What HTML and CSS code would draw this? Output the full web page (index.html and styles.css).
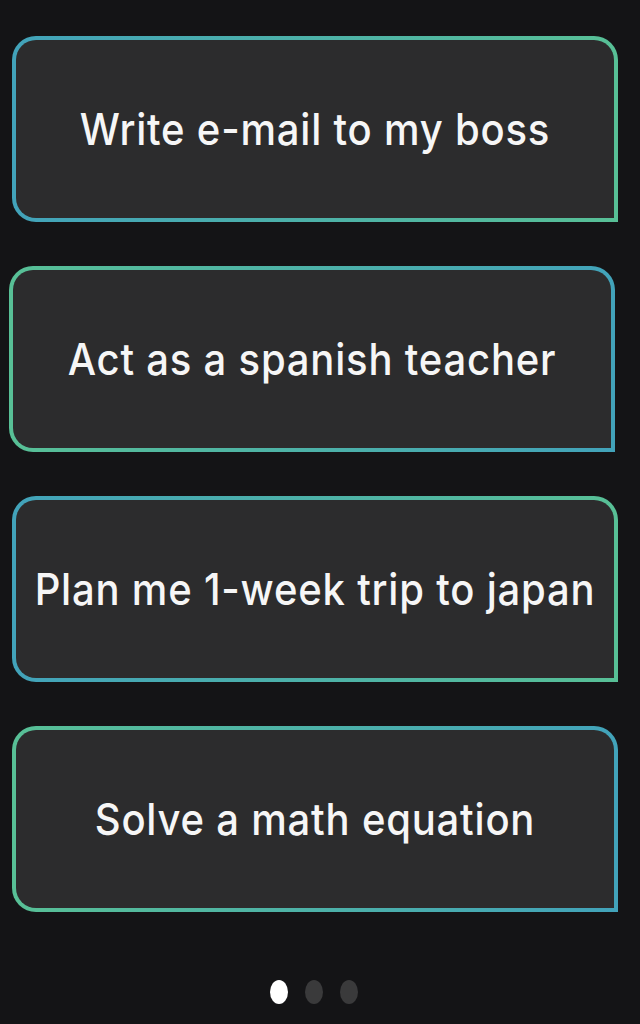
FILE: index.html
```html
<!DOCTYPE html>
<html>
<head>
<meta charset="utf-8">
<link rel="stylesheet" href="styles.css">
</head>
<body>
<main class="screen">
  <div class="cards">
    <div class="card card-bg"><span class="label">Write e-mail to my boss</span></div>
    <div class="card card-gb shift-left"><span class="label">Act as a spanish teacher</span></div>
    <div class="card card-bg"><span class="label">Plan me 1-week trip to japan</span></div>
    <div class="card card-gb"><span class="label">Solve a math equation</span></div>
  </div>
  <div class="dots">
    <span class="dot active"></span>
    <span class="dot"></span>
    <span class="dot"></span>
  </div>
</main>
</body>
</html>
```
FILE: styles.css
```css
html, body {
  margin: 0;
  padding: 0;
  background: #141416;
}
.screen {
  width: 640px;
  height: 1024px;
  box-sizing: border-box;
  padding: 36px 22px 0 12px;
  display: flex;
  flex-direction: column;
  font-family: "Inter", "Lato", sans-serif;
}
.cards {
  display: flex;
  flex-direction: column;
  gap: 44px;
}
.card {
  height: 186px;
  box-sizing: border-box;
  border: 4px solid transparent;
  border-radius: 24px 24px 0 24px;
  display: flex;
  align-items: center;
  justify-content: center;
}
.card-bg {
  background: linear-gradient(#2c2c2d, #2c2c2d) padding-box,
              linear-gradient(90deg, #42a3ba, #58c096) border-box;
}
.card-gb {
  background: linear-gradient(#2c2c2d, #2c2c2d) padding-box,
              linear-gradient(90deg, #58c096, #42a3ba) border-box;
}
.shift-left {
  margin-left: -3px;
  margin-right: 3px;
}
.label {
  color: #f6f6f6;
  font-size: 40px;
  font-weight: 500;
  letter-spacing: 0.8px;
  white-space: nowrap;
  display: inline-block;
  transform: scaleY(1.1);
}
.dots {
  margin-top: 68px;
  display: flex;
  justify-content: center;
  gap: 17px;
  padding-right: 2px;
}
.dot {
  width: 18px;
  height: 24px;
  border-radius: 50%;
  background: #3a3a3b;
}
.dot.active {
  background: #ffffff;
}
```
